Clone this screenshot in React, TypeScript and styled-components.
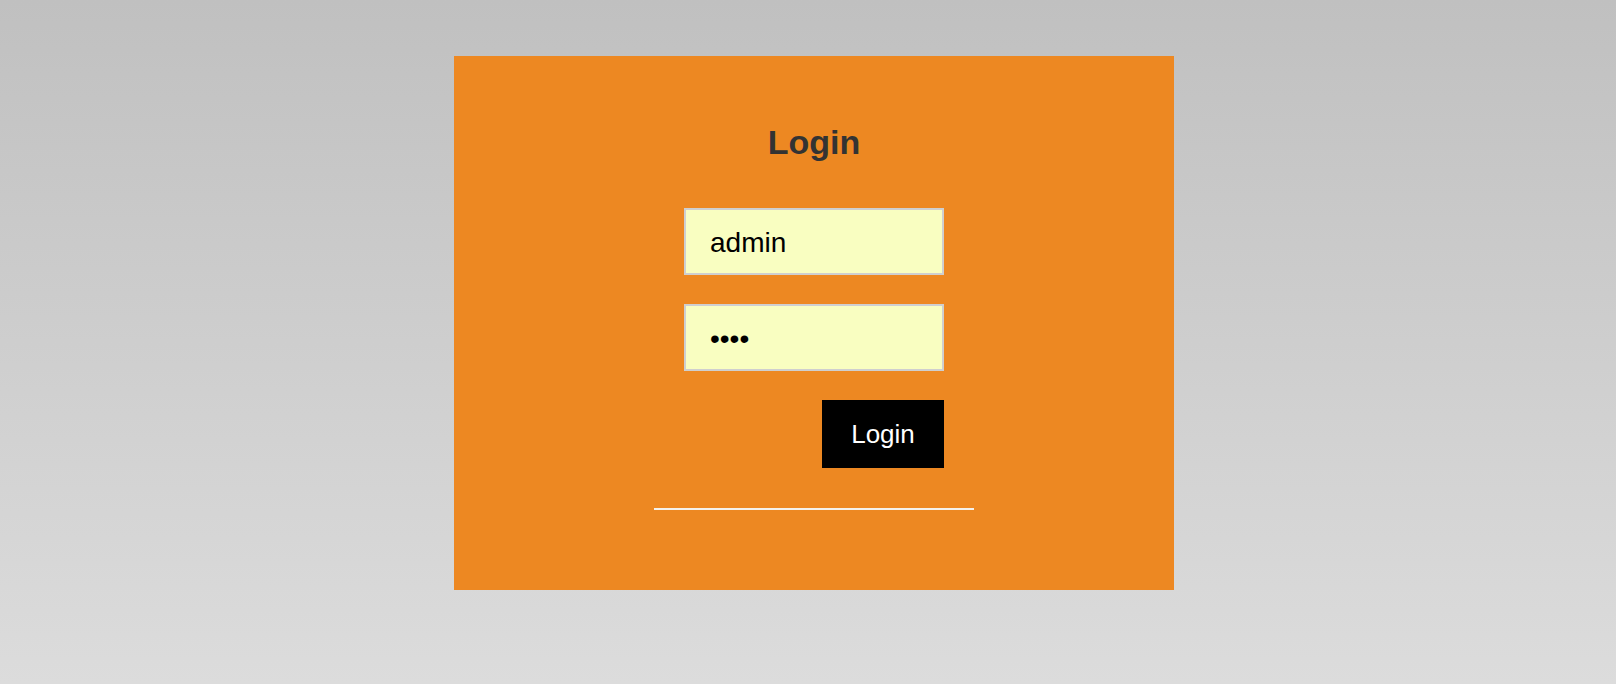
import React from "react";
import styled, { createGlobalStyle } from "styled-components";

const GlobalStyle = createGlobalStyle`
  html, body {
    margin: 0;
    padding: 0;
  }
  body {
    height: 684px;
    background: linear-gradient(to bottom, #c0c0c0 0%, #dcdcdc 100%);
    font-family: "Liberation Sans", Arial, Helvetica, sans-serif;
  }
`;

const Page = styled.div`
  display: flex;
  justify-content: center;
  padding: 56px 0 0 12px;
  height: 684px;
  box-sizing: border-box;
`;

const Card = styled.div`
  width: 720px;
  height: 534px;
  box-sizing: border-box;
  background: #ed8822;
  display: flex;
  flex-direction: column;
  align-items: center;
  padding-top: 66px;
`;

const Title = styled.h2`
  margin: 0;
  font-size: 34px;
  line-height: 40px;
  font-weight: bold;
  color: #333333;
`;

const Form = styled.form`
  width: 260px;
  display: flex;
  flex-direction: column;
  gap: 29px;
  margin-top: 46px;
`;

const Field = styled.input`
  box-sizing: border-box;
  width: 260px;
  height: 67px;
  margin: 0;
  padding: 2px 0 0 24px;
  border: 2px solid #cfcfcf;
  background: #f9fec1;
  color: #000;
  font-family: "Liberation Sans", Arial, Helvetica, sans-serif;
  font-size: 28px;
  outline: none;
`;

const SubmitButton = styled.button`
  align-self: flex-end;
  width: 122px;
  height: 68px;
  margin: 0;
  border: none;
  background: #000;
  color: #fff;
  font-family: "Liberation Sans", Arial, Helvetica, sans-serif;
  font-size: 26px;
  cursor: pointer;
`;

const Divider = styled.div`
  width: 320px;
  height: 2px;
  background: #f4f1ec;
  margin-top: 40px;
`;

export default function App() {
  return (
    <>
      <GlobalStyle />
      <Page>
        <Card>
          <Title>Login</Title>
          <Form onSubmit={(e) => e.preventDefault()}>
            <Field type="text" defaultValue="admin" />
            <Field type="password" defaultValue="1234" />
            <SubmitButton type="submit">Login</SubmitButton>
          </Form>
          <Divider />
        </Card>
      </Page>
    </>
  );
}
